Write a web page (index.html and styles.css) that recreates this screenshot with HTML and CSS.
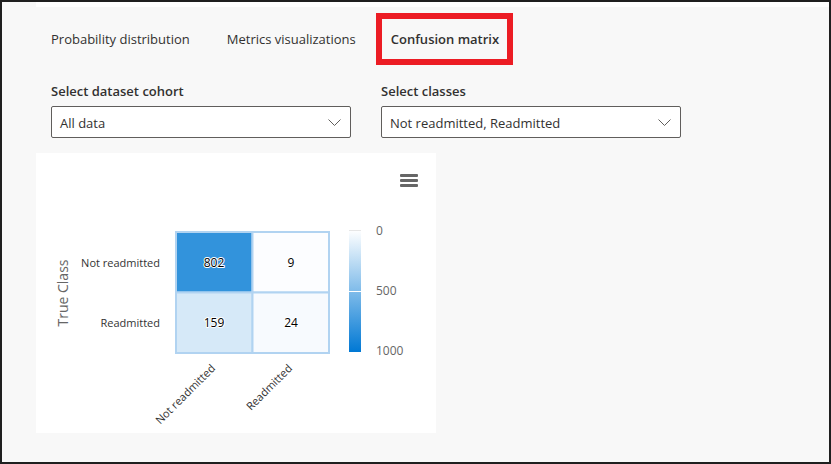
FILE: index.html
```html
<!DOCTYPE html>
<html lang="en">
<head>
<meta charset="utf-8">
<title>Confusion matrix</title>
<link rel="stylesheet" href="styles.css">
</head>
<body>
<div class="frame">
  <div class="strip"></div>
  <div class="content">
    <div class="tabs">
      <div class="tab tab-first">Probability distribution</div>
      <div class="tab tab-second">Metrics visualizations</div>
      <div class="tab tab-selected">Confusion matrix</div>
    </div>
    <div class="filters">
      <div class="field">
        <div class="label">Select dataset cohort</div>
        <div class="dropdown">
          <span class="dropdown-text">All data</span>
          <svg class="chevron" width="13" height="7" viewBox="0 0 13 7"><polyline points="0.5,0.5 6.5,6.5 12.5,0.5" fill="none" stroke="#605e5c" stroke-width="1"/></svg>
        </div>
      </div>
      <div class="field">
        <div class="label">Select classes</div>
        <div class="dropdown">
          <span class="dropdown-text">Not readmitted, Readmitted</span>
          <svg class="chevron" width="13" height="7" viewBox="0 0 13 7"><polyline points="0.5,0.5 6.5,6.5 12.5,0.5" fill="none" stroke="#605e5c" stroke-width="1"/></svg>
        </div>
      </div>
    </div>
    <div class="card">
      <svg class="chart" width="400" height="280" viewBox="0 0 400 280">
        <defs>
          <linearGradient id="scale" x1="0" y1="0" x2="0" y2="1">
            <stop offset="0" stop-color="#ffffff"/>
            <stop offset="1" stop-color="#0078d4"/>
          </linearGradient>
        </defs>
        <g fill="#666666">
          <rect x="364" y="21" width="18" height="3" rx="1"/>
          <rect x="364" y="26" width="18" height="3" rx="1"/>
          <rect x="364" y="31" width="18" height="3" rx="1"/>
        </g>
        <text class="axis-title" x="32" y="140" transform="rotate(-90 32 140)" text-anchor="middle">True Class</text>
        <text class="cat" x="124" y="114" text-anchor="end">Not readmitted</text>
        <text class="cat" x="124" y="174" text-anchor="end">Readmitted</text>
        <g stroke="#b1d3f1" stroke-width="2">
          <rect x="140" y="79" width="76.5" height="60.5" fill="#3293dc"/>
          <rect x="216.5" y="79" width="76.5" height="60.5" fill="#fcfdff"/>
          <rect x="140" y="139.5" width="76.5" height="60.5" fill="#d6e9f8"/>
          <rect x="216.5" y="139.5" width="76.5" height="60.5" fill="#f7fafe"/>
        </g>
        <g class="val" text-anchor="middle">
          <text x="178" y="114">802</text>
          <text x="255" y="114">9</text>
          <text x="178" y="174">159</text>
          <text x="255" y="174">24</text>
        </g>
        <text class="cat" x="180" y="216" text-anchor="end" transform="rotate(-45 180 216)">Not readmitted</text>
        <text class="cat" x="257" y="216" text-anchor="end" transform="rotate(-45 257 216)">Readmitted</text>
        <rect x="313" y="77" width="12" height="122" fill="url(#scale)"/>
        <line x1="313" y1="77.5" x2="325" y2="77.5" stroke="#e6e6e6" stroke-width="1"/>
        <line x1="313" y1="138.5" x2="325" y2="138.5" stroke="#ffffff" stroke-width="1"/>
        <g class="scale-label">
          <text x="340" y="82">0</text>
          <text x="340" y="142">500</text>
          <text x="340" y="202">1000</text>
        </g>
      </svg>
    </div>
  </div>
</div>
</body>
</html>
```
FILE: styles.css
```css
html, body {
  margin: 0;
  padding: 0;
}

body {
  font-family: "Open Sans", "Noto Sans", sans-serif;
  color: #323130;
}

.frame {
  width: 831px;
  height: 464px;
  box-sizing: border-box;
  border: 2px solid #1f1f1f;
  background: #f8f8f8;
  overflow: hidden;
}

.strip {
  height: 5px;
  margin-left: 34px;
  background: #ffffff;
}

.content {
  padding-left: 49px;
}

.tabs {
  display: flex;
  align-items: center;
  margin-top: 6px;
  height: 52px;
  font-size: 13px;
  line-height: 18px;
}

.tab {
  white-space: nowrap;
}

.tab-first {
  margin-right: 37px;
}

.tab-second {
  margin-right: 20px;
}

.tab-selected {
  font-weight: 600;
  box-sizing: border-box;
  height: 52px;
  display: flex;
  align-items: center;
  padding: 0 8px 0 9px;
  border: 6px solid #ec1c24;
}

.filters {
  display: flex;
  gap: 30px;
  margin-top: 17px;
}

.field {
  width: 300px;
}

.label {
  font-size: 13px;
  font-weight: 600;
  line-height: 18px;
  margin-bottom: 6px;
}

.dropdown {
  box-sizing: border-box;
  height: 32px;
  border: 1px solid #605e5c;
  border-radius: 2px;
  background: #ffffff;
  display: flex;
  align-items: center;
  padding: 1px 9px 0 8px;
  font-size: 13px;
}

.dropdown-text {
  flex: 1;
}

.chevron {
  display: block;
}

.card {
  width: 400px;
  height: 280px;
  margin-top: 15px;
  margin-left: -15px;
  background: #ffffff;
}

.chart {
  display: block;
  font-family: "Open Sans", "Noto Sans", sans-serif;
}

.axis-title {
  font-size: 14px;
  fill: #666666;
}

.cat {
  font-size: 11px;
  fill: #333333;
}

.val text {
  font-size: 12px;
  font-weight: 400;
  fill: #000000;
  stroke: #ffffff;
  stroke-width: 2px;
  stroke-linejoin: round;
  paint-order: stroke;
}

.scale-label text {
  font-size: 12px;
  fill: #666666;
}
```
